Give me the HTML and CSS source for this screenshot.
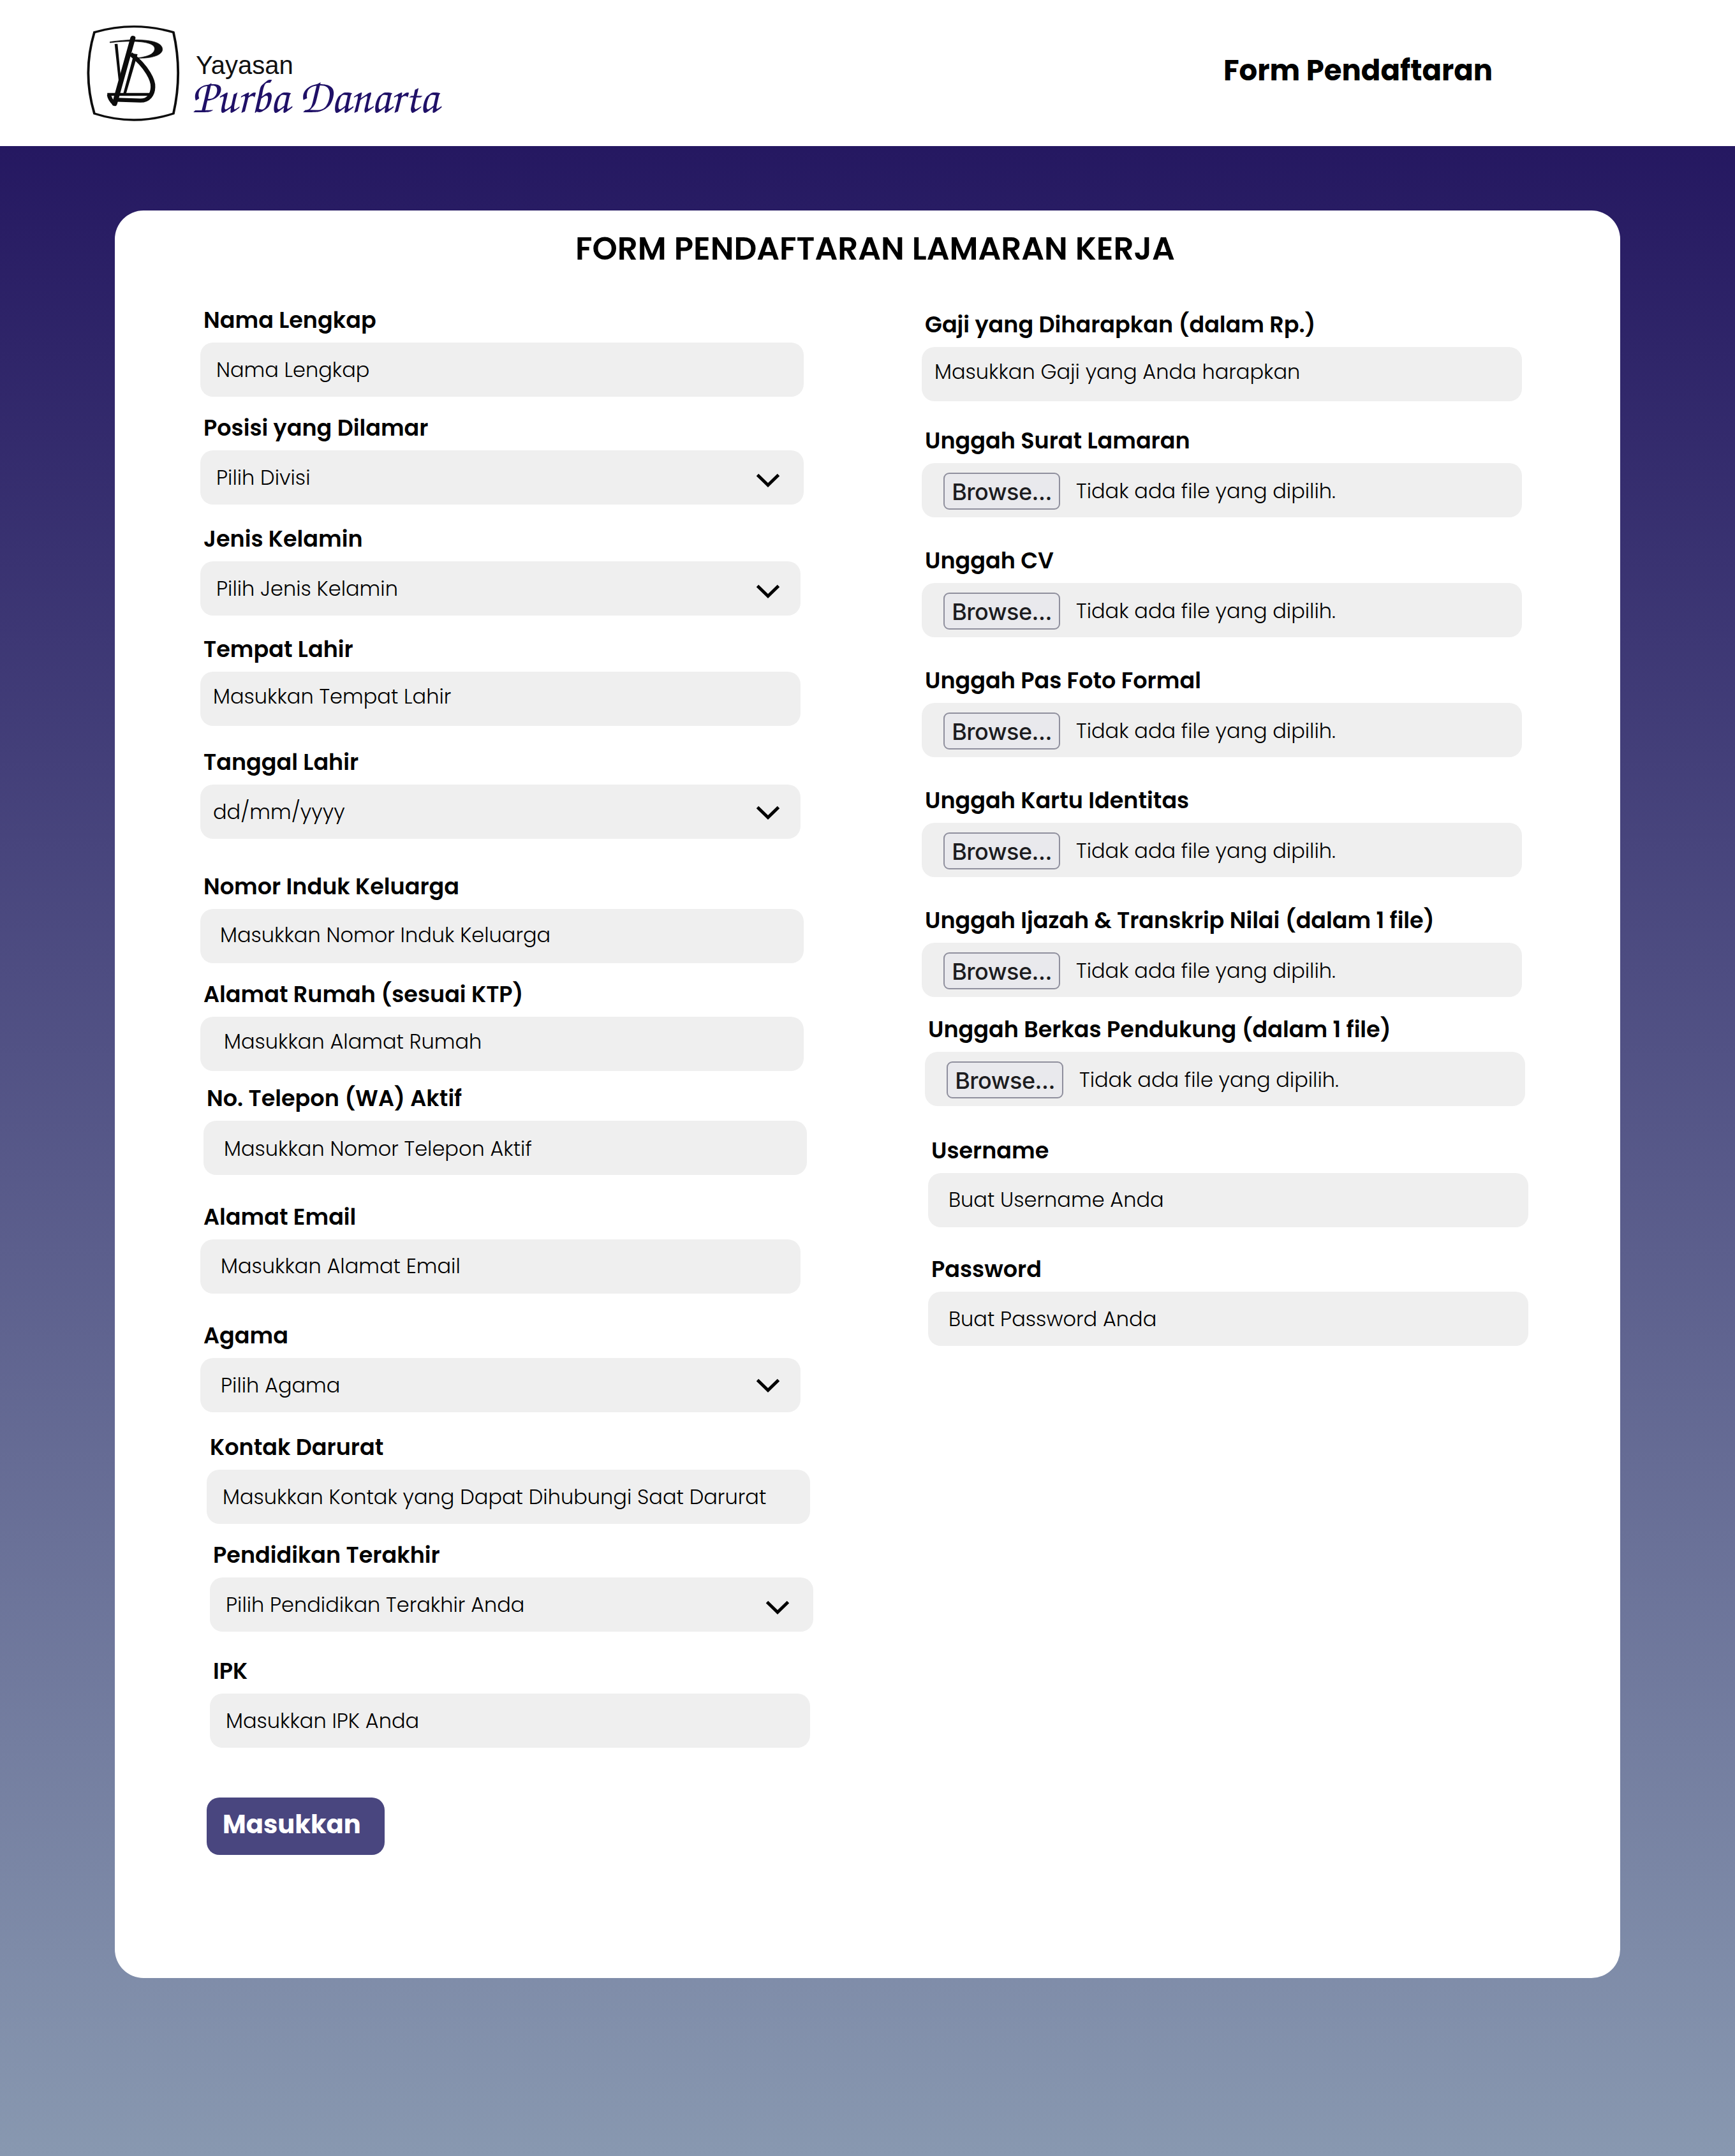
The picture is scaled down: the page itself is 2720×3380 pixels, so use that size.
FILE: index.html
```html
<!DOCTYPE html>
<html lang="id">
<head>
<meta charset="utf-8">
<title>Form Pendaftaran</title>
<link rel="stylesheet" href="styles.css">
</head>
<body>
<svg class="sprite" aria-hidden="true">
  <symbol id="chevron" viewBox="0 0 40 24"><path d="M3.500 3.500L20 19.500L36.500 3.500" fill="none" stroke="#000" stroke-width="5"/></symbol>
</svg>
<header class="topbar">
  <svg class="logo" viewBox="0 0 600 209" role="img" aria-label="Yayasan Purba Danarta">
    <g transform="scale(.38265 .33333)" fill="none" stroke="#0c0c0c">
      <path d="M73 92Q235 38 397 92Q435 283 397 474Q235 534 73 474Q23 283 73 92Z" stroke-width="10"/>
      <path d="M137 137C220 122 352 118 352 172C352 205 290 217 245 213C290 207 320 195 320 168C320 135 230 127 137 141Z" fill="#0c0c0c" stroke-width="2"/>
      <path d="M156 147L168 146L183 325L174 335ZM235 193L250 195L203 380L192 378Z" fill="#0c0c0c" stroke="none"/>
      <path d="M231 119L156 428" stroke-width="21" stroke-linecap="round"/>
      <path d="M222 194C290 255 315 320 313 350C312 385 295 413 262 413L162 409" stroke-width="19"/>
      <path d="M126 384H306" stroke-width="13"/>
      <path d="M133 385C135 403 145 418 156 430" stroke-width="17"/>
    </g>
    <text class="logo-top" x="187" y="96">Yayasan</text>
    <text class="logo-name" transform="translate(180.500 156) scale(.94 1)">Purba Danarta</text>
  </svg>
  <nav class="nav">Form Pendaftaran</nav>
</header>
<main class="page">
  <form class="card">
    <h1 class="title">FORM PENDAFTARAN LAMARAN KERJA</h1>
    <div class="columns">
      <section class="column">
        <div class="field nama"><label class="label">Nama Lengkap</label><div class="box"><span class="value">Nama Lengkap</span></div></div>
        <div class="field posisi"><label class="label">Posisi yang Dilamar</label><div class="box"><span class="value">Pilih Divisi</span><svg class="chevron"><use href="#chevron"/></svg></div></div>
        <div class="field narrow kelamin"><label class="label">Jenis Kelamin</label><div class="box"><span class="value">Pilih Jenis Kelamin</span><svg class="chevron"><use href="#chevron"/></svg></div></div>
        <div class="field narrow tempat"><label class="label">Tempat Lahir</label><div class="box"><span class="value">Masukkan Tempat Lahir</span></div></div>
        <div class="field narrow tanggal"><label class="label">Tanggal Lahir</label><div class="box"><span class="value">dd/mm/yyyy</span><svg class="chevron"><use href="#chevron"/></svg></div></div>
        <div class="field induk"><label class="label">Nomor Induk Keluarga</label><div class="box"><span class="value">Masukkan Nomor Induk Keluarga</span></div></div>
        <div class="field rumah"><label class="label">Alamat Rumah (sesuai KTP)</label><div class="box"><span class="value">Masukkan Alamat Rumah</span></div></div>
        <div class="field telepon"><label class="label">No. Telepon (WA) Aktif</label><div class="box"><span class="value">Masukkan Nomor Telepon Aktif</span></div></div>
        <div class="field narrow email"><label class="label">Alamat Email</label><div class="box"><span class="value">Masukkan Alamat Email</span></div></div>
        <div class="field narrow agama"><label class="label">Agama</label><div class="box"><span class="value">Pilih Agama</span><svg class="chevron"><use href="#chevron"/></svg></div></div>
        <div class="field kontak"><label class="label">Kontak Darurat</label><div class="box"><span class="value">Masukkan Kontak yang Dapat Dihubungi Saat Darurat</span></div></div>
        <div class="field pendidikan"><label class="label">Pendidikan Terakhir</label><div class="box"><span class="value">Pilih Pendidikan Terakhir Anda</span><svg class="chevron"><use href="#chevron"/></svg></div></div>
        <div class="field narrow ipk"><label class="label">IPK</label><div class="box"><span class="value">Masukkan IPK Anda</span></div></div>
        <button class="submit" type="button">Masukkan</button>
      </section>
      <section class="column column-right">
        <div class="field narrow gaji"><label class="label">Gaji yang Diharapkan (dalam Rp.)</label><div class="box"><span class="value">Masukkan Gaji yang Anda harapkan</span></div></div>
        <div class="field narrow file surat"><label class="label">Unggah Surat Lamaran</label><div class="box"><span class="browse">Browse...</span><span class="value">Tidak ada file yang dipilih.</span></div></div>
        <div class="field narrow file cv"><label class="label">Unggah CV</label><div class="box"><span class="browse">Browse...</span><span class="value">Tidak ada file yang dipilih.</span></div></div>
        <div class="field narrow file foto"><label class="label">Unggah Pas Foto Formal</label><div class="box"><span class="browse">Browse...</span><span class="value">Tidak ada file yang dipilih.</span></div></div>
        <div class="field narrow file kartu"><label class="label">Unggah Kartu Identitas</label><div class="box"><span class="browse">Browse...</span><span class="value">Tidak ada file yang dipilih.</span></div></div>
        <div class="field narrow file ijazah"><label class="label">Unggah Ijazah &amp; Transkrip Nilai (dalam 1 file)</label><div class="box"><span class="browse">Browse...</span><span class="value">Tidak ada file yang dipilih.</span></div></div>
        <div class="field narrow file berkas"><label class="label">Unggah Berkas Pendukung (dalam 1 file)</label><div class="box"><span class="browse">Browse...</span><span class="value">Tidak ada file yang dipilih.</span></div></div>
        <div class="field narrow username"><label class="label">Username</label><div class="box"><span class="value">Buat Username Anda</span></div></div>
        <div class="field narrow password"><label class="label">Password</label><div class="box"><span class="value">Buat Password Anda</span></div></div>
      </section>
    </div>
  </form>
</main>
</body>
</html>
```
FILE: styles.css
```css
* { box-sizing: border-box; }

body {
  margin: 0;
  width: 2720px;
  height: 3380px;
  display: flex;
  flex-direction: column;
  background: #fff;
  color: #000;
  font-family: Poppins, Inter, "Open Sans", sans-serif;
}

.sprite { display: none; }

/* Header */
.topbar {
  height: 229px;
  flex: none;
  display: flex;
  align-items: flex-start;
  justify-content: space-between;
  padding: 20px 378px 0 120px;
}

.logo { width: 600px; height: 209px; }
.logo-top { font: 40px "Liberation Sans", Arial, sans-serif; fill: #111; }
.logo-name { font: 76px "Monotype Corsiva", "TeX Gyre Chorus", "Liberation Serif", serif; fill: #1f1067; }

.nav {
  width: 424px;
  margin-top: 61px;
  font-size: 45px;
  font-weight: 700;
  line-height: 60px;
  white-space: nowrap;
}

/* Page and card */
.page {
  flex: 1;
  padding: 101px 180px 0;
  background: linear-gradient(#251861, #8898b0);
}

.card {
  height: 2771px;
  padding: 30px 0 0 134px;
  border-radius: 45px;
  background: #fff;
}

.title {
  margin: 0 0 61px 588px;
  font-size: 50px;
  font-weight: 600;
  line-height: 60px;
  white-space: nowrap;
}

.columns {
  display: grid;
  grid-template-columns: 1131px 1fr;
  align-items: start;
}

.column {
  display: flex;
  flex-direction: column;
  align-items: flex-start;
}

.column-right { padding-top: 7px; }

/* Fields */
.field {
  width: 946px;
  margin-top: var(--gap, 0);
  margin-left: var(--indent, 0);
}

.narrow { width: 941px; }

.label {
  display: block;
  margin-bottom: 14px;
  padding-left: 5px;
  font-size: 35px;
  font-weight: 600;
  line-height: 42px;
  white-space: nowrap;
}

.box {
  height: 85px;
  display: flex;
  align-items: center;
  justify-content: space-between;
  padding: 1px 36px 0 var(--inset, 25px);
  border-radius: 20px;
  background: #efefef;
}

.narrow .box { padding-right: 31px; }

.value {
  margin-top: var(--drop-text, 0);
  padding-bottom: var(--lift, 0);
  font-size: 32px;
  font-weight: 300;
  white-space: nowrap;
}

.chevron {
  width: 40px;
  height: 24px;
  margin-top: var(--drop, 8px);
}

/* File pickers */
.file { --inset: 34px; --drop-text: 2px; }
.file .box { justify-content: flex-start; gap: 25px; }

.browse {
  width: 183px;
  height: 58px;
  margin-top: 2px;
  border: 2px solid #8f8f9d;
  border-radius: 9px;
  background: #e9e9ed;
  color: #1c1c20;
  font-family: Inter, sans-serif;
  font-size: 36px;
  font-weight: 450;
  line-height: 56px;
  letter-spacing: -.5px;
  text-align: center;
}

/* Left column */
.posisi { --gap: 28px; }
.kelamin { --gap: 33px; }
.tempat { --gap: 32px; --inset: 20px; --lift: 8px; }
.tanggal { --gap: 36px; --inset: 20px; --drop: 1px; }
.induk { --gap: 54px; --inset: 31px; --lift: 4px; }
.rumah { --gap: 28px; --inset: 37px; --lift: 8px; }
.telepon { --gap: 22px; --indent: 5px; --inset: 32px; --drop-text: 2px; }
.email { --gap: 45px; --inset: 32px; --lift: 3px; }
.agama { --gap: 45px; --inset: 32px; --drop: 0px; }
.kontak { --gap: 34px; --indent: 10px; }
.pendidikan { --gap: 28px; --indent: 15px; }
.ipk { --gap: 41px; --indent: 15px; }

/* Right column */
.gaji { --inset: 20px; --lift: 8px; }
.surat { --gap: 41px; }
.cv, .foto, .kartu, .ijazah { --gap: 47px; }
.berkas { --gap: 30px; --indent: 5px; }
.username { --gap: 49px; --indent: 10px; --inset: 32px; --lift: 3px; }
.password { --gap: 45px; --indent: 10px; --inset: 32px; }

.submit {
  width: 279px;
  height: 90px;
  margin: 78px 0 0 10px;
  padding: 0 0 6px 25px;
  border: 0;
  border-radius: 20px;
  background: #49467f;
  color: #fff;
  font-family: inherit;
  font-size: 40px;
  font-weight: 700;
  text-align: left;
}
```
